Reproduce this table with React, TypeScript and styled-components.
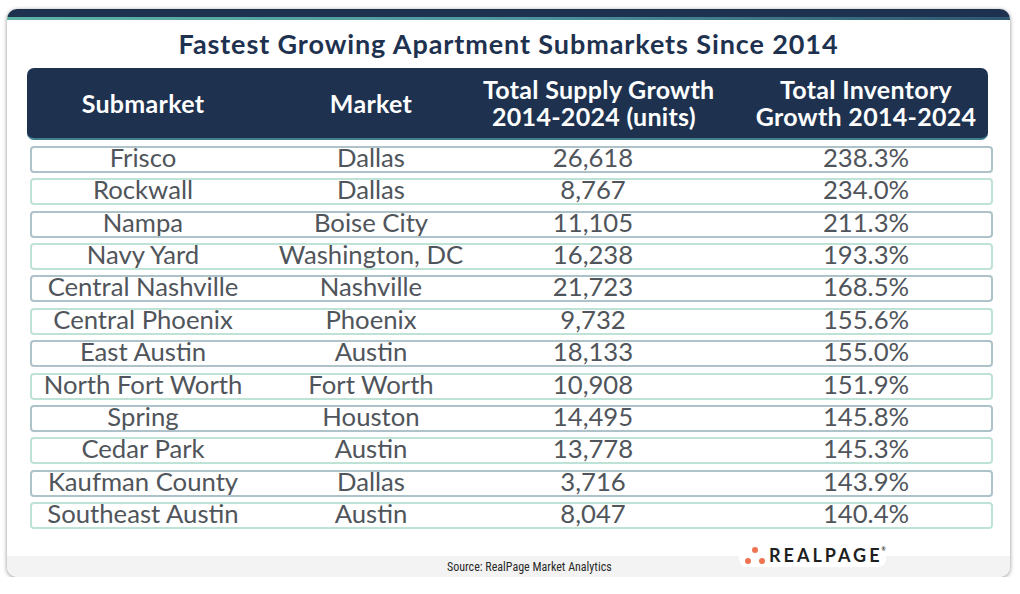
import styled, { createGlobalStyle } from "styled-components";

const GlobalStyle = createGlobalStyle`
	html, body {
		margin: 0;
		padding: 0;
		background: #ffffff;
	}
	body {
		font-family: Lato, "Open Sans", sans-serif;
	}
`;

const rows = [
	["Frisco", "Dallas", "26,618", "238.3%"],
	["Rockwall", "Dallas", "8,767", "234.0%"],
	["Nampa", "Boise City", "11,105", "211.3%"],
	["Navy Yard", "Washington, DC", "16,238", "193.3%"],
	["Central Nashville", "Nashville", "21,723", "168.5%"],
	["Central Phoenix", "Phoenix", "9,732", "155.6%"],
	["East Austin", "Austin", "18,133", "155.0%"],
	["North Fort Worth", "Fort Worth", "10,908", "151.9%"],
	["Spring", "Houston", "14,495", "145.8%"],
	["Cedar Park", "Austin", "13,778", "145.3%"],
	["Kaufman County", "Dallas", "3,716", "143.9%"],
	["Southeast Austin", "Austin", "8,047", "140.4%"],
];

const Card = styled.div`
	position: relative;
	margin: 9px 0 0 7px;
	width: 1003px;
	height: 568px;
	border-radius: 10px;
	box-shadow: 0 1px 4px rgba(0, 0, 0, 0.45);
	overflow: hidden;
	display: flex;
	flex-direction: column;
	background: #ffffff;
`;

const TopBar = styled.div`
	height: 8px;
	background: #1e3250;
`;

const Accent = styled.div`
	height: 3px;
	background: linear-gradient(90deg, #5fb3a3 0%, #4e97a0 50%, #2e5670 100%);
`;

const Title = styled.h1`
	margin: 0;
	padding-top: 9px;
	height: 39px;
	text-align: center;
	font-size: 27px;
	line-height: 30px;
	font-weight: 700;
	color: #1e3250;
	letter-spacing: 0.9px;
`;

const Header = styled.div`
	margin-left: 20px;
	width: 961px;
	height: 72px;
	box-sizing: border-box;
	border-radius: 7px;
	background: #1e3250;
	border-bottom: 2px solid #3f7f8f;
	display: grid;
	grid-template-columns: 232px 224px 222px 1fr;
	align-items: center;
`;

const HeadCell = styled.div<{ $shift?: number }>`
	text-align: center;
	color: #ffffff;
	font-size: 25px;
	line-height: 27px;
	font-weight: 700;
	letter-spacing: 0.3px;
	white-space: nowrap;
	padding-left: ${(p) => p.$shift || 0}px;
`;

const Rows = styled.div`
	margin: 6px 0 0 23px;
	width: 963px;
	display: flex;
	flex-direction: column;
	gap: 5.36px;
`;

const Row = styled.div<{ $alt: boolean }>`
	height: 27px;
	box-sizing: border-box;
	border: 2px solid ${(p) => (p.$alt ? "#bfe2d7" : "#aec2ca")};
	border-radius: 4px;
	display: grid;
	grid-template-columns: 222px 234px 210px 1fr;
	align-items: start;
`;

const Cell = styled.div<{ $shift?: number }>`
	text-align: center;
	color: #50555b;
	font-size: 25.7px;
	line-height: 18px;
	white-space: nowrap;
	padding-left: ${(p) => p.$shift || 0}px;
`;

const Footer = styled.div`
	position: relative;
	margin-top: auto;
	height: 21px;
	background: #f3f3f3;
	display: flex;
	align-items: center;
	padding-left: 440px;
`;

const Source = styled.span`
	font-family: "Liberation Sans Narrow", "Roboto Condensed", "Liberation Sans", sans-serif;
	font-size: 12px;
	color: #2a2a2a;
`;

const Logo = styled.div`
	position: absolute;
	left: 732px;
	top: -13px;
	width: 147px;
	height: 24px;
	border-radius: 8px;
	background: #ffffff;
	display: flex;
	align-items: center;
	gap: 4px;
	padding-left: 6px;
	box-sizing: border-box;
`;

const LogoText = styled.span`
	font-family: Lato, "DejaVu Sans", sans-serif;
	font-weight: 700;
	font-size: 18px;
	letter-spacing: 3px;
	color: #1f1f1f;
	position: relative;
	sup {
		font-size: 5px;
		letter-spacing: 0;
		position: absolute;
		right: -3px;
		top: 2px;
	}
`;

function Dots() {
	return (
		<svg width="20" height="18" viewBox="0 0 20 18">
			<circle cx="10" cy="4" r="3" fill="#ee7350" />
			<circle cx="3" cy="15" r="3" fill="#ee7350" />
			<circle cx="17" cy="15" r="3" fill="#ee7350" />
		</svg>
	);
}

export default function App() {
	return (
		<>
			<GlobalStyle />
			<Card>
				<TopBar />
				<Accent />
				<Title>Fastest Growing Apartment Submarkets Since 2014</Title>
				<Header>
					<HeadCell>Submarket</HeadCell>
					<HeadCell>Market</HeadCell>
					<HeadCell>
						Total Supply Growth
						<br />
						2014-2024 (units)
					</HeadCell>
					<HeadCell $shift={39}>
						Total Inventory
						<br />
						Growth 2014-2024
					</HeadCell>
				</Header>
				<Rows>
					{rows.map((r, i) => (
						<Row key={r[0]} $alt={i % 2 === 1}>
							<Cell>{r[0]}</Cell>
							<Cell>{r[1]}</Cell>
							<Cell>{r[2]}</Cell>
							<Cell $shift={43}>{r[3]}</Cell>
						</Row>
					))}
				</Rows>
				<Footer>
					<Source>Source: RealPage Market Analytics</Source>
					<Logo>
						<Dots />
						<LogoText>
							REALPAGE<sup>®</sup>
						</LogoText>
					</Logo>
				</Footer>
			</Card>
		</>
	);
}
